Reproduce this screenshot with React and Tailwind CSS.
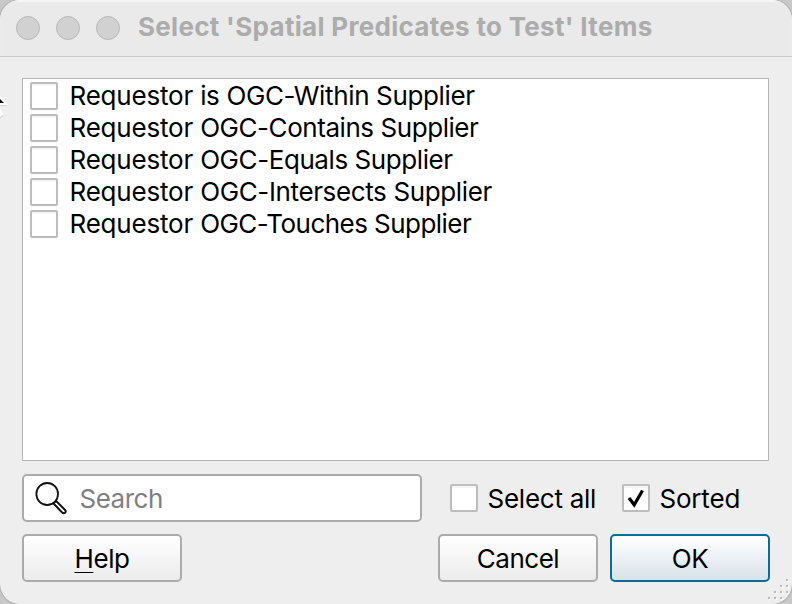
import React from "react";

const predicates = [
  { label: "is OGC-Within Supplier", tracking: "tracking-[-0.36px]" },
  { label: "OGC-Contains Supplier", tracking: "tracking-[-0.44px]" },
  { label: "OGC-Equals Supplier", tracking: "tracking-[-0.42px]" },
  { label: "OGC-Intersects Supplier", tracking: "tracking-[-0.37px]" },
  { label: "OGC-Touches Supplier", tracking: "tracking-[-0.54px]" },
];

const gripDots = [
  [22, 1], [16, 7], [22, 7], [10, 13], [16, 13], [22, 13], [4, 19], [10, 19], [16, 19],
];

function CheckBox({ checked }) {
  return (
    <span className="flex size-7 shrink-0 items-center justify-center rounded-[2px] border-2 border-[#bdbdbd] bg-white shadow-[inset_0_2px_1px_#f5f5f5]">
      {checked && (
        <svg width="24" height="24" viewBox="0 0 24 24" fill="none">
          <path d="M5 12 L10.2 18.8 L18.5 4.5" stroke="#000" strokeWidth="3.2" />
        </svg>
      )}
    </span>
  );
}

function Button({ children, primary }) {
  return (
    <button
      className={
        "flex h-12 w-40 items-center justify-center rounded-[5px] border-2 bg-linear-to-b pt-[2px] text-[26px] leading-8 " +
        (primary
          ? "border-[#0b6c94] from-white to-[#d8e2ea]"
          : "border-[#ababab] from-white to-[#ececec]")
      }
    >
      {children}
    </button>
  );
}

export default function App() {
  return (
    <div className="relative h-[604px] w-[792px] overflow-hidden bg-[#c9c9c9] font-['Inter','Liberation_Sans',sans-serif] text-black">
      <div className="flex h-full flex-col overflow-hidden rounded-[20px] bg-[#eeeeee] shadow-[0_0_2px_#777]">
        <header className="flex h-[57px] shrink-0 items-center border-b border-[#c8c8c8] bg-[#eaeaea] pl-4 shadow-[inset_0_2px_1px_#f6f6f6]">
          <div className="flex gap-4">
            <i className="size-6 rounded-full border border-[#b8b8b8] bg-[#d1d1d1]" />
            <i className="size-6 rounded-full border border-[#b8b8b8] bg-[#d1d1d1]" />
            <i className="size-6 rounded-full border border-[#b8b8b8] bg-[#d1d1d1]" />
          </div>
          <h1 className="ml-[18px] whitespace-nowrap pb-[2px] text-[26px] font-bold leading-8 tracking-[0.3px] text-[#acacac]">
            Select 'Spatial Predicates to Test' Items
          </h1>
        </header>
        <main className="flex flex-col px-[22px] pt-[21px]">
          <ul className="h-[383px] w-[747px] border border-[#b5b5b5] bg-white pl-[7px] pt-[1px]">
            {predicates.map((p) => (
              <li key={p.label} className="flex h-8 items-center gap-[11.5px]">
                <CheckBox />
                <span className={"whitespace-nowrap text-[26px] leading-8 " + p.tracking}>
                  <span className="tracking-[-0.2px]">Requestor </span>
                  {p.label}
                </span>
              </li>
            ))}
          </ul>
          <div className="mt-[13px] flex h-12 items-center">
            <div className="flex h-12 w-[400px] items-center rounded-[5px] border-2 border-[#ababab] bg-white pl-[9px]">
              <svg width="36" height="36" viewBox="0 0 36 36" fill="none" stroke="#111">
                <ellipse cx="14.2" cy="14" rx="10.8" ry="11" strokeWidth="1.8" />
                <path d="M20.3 23.3 L23.2 21 L32.3 30.2 Q33.4 31.8 31.9 32.8 Q30.2 33.7 29 32.3 Z" strokeWidth="2" />
              </svg>
              <span className="ml-[10.5px] pt-[2px] text-[26px] leading-8 tracking-[-0.5px] text-[#7f7f7f]">Search</span>
            </div>
            <label className="ml-7 flex w-[172px] items-center gap-[9.5px]">
              <CheckBox />
              <span className="whitespace-nowrap pt-[2px] text-[26px] leading-8 tracking-[-0.25px]">Select all</span>
            </label>
            <label className="flex items-center gap-[9.5px]">
              <CheckBox checked />
              <span className="pt-[2px] text-[26px] leading-8 tracking-[-0.2px]">Sorted</span>
            </label>
          </div>
          <div className="mt-3 flex h-12">
            <Button>
              <span className="tracking-[-0.4px]"><span className="underline decoration-1 underline-offset-4">H</span>elp</span>
            </Button>
            <div className="ml-64 flex gap-3">
              <Button><span className="tracking-[-0.5px]">Cancel</span></Button>
              <Button primary><span className="tracking-[-0.5px]">OK</span></Button>
            </div>
          </div>
        </main>
      </div>
      <svg className="absolute bottom-0 right-0" width="28" height="26" viewBox="0 0 28 26">
        {gripDots.map(([x, y]) => (
          <g key={x + "-" + y}>
            <rect x={x + 1} y={y + 1} width="2" height="2" fill="#fafafa" />
            <rect x={x} y={y} width="2" height="2" fill="#b9b9b9" />
          </g>
        ))}
      </svg>
      <svg className="absolute left-0 top-[94px]" width="10" height="30" viewBox="0 0 10 30">
        <path d="M0 1 L8 11 L0 11 Z M0 14 L3 21 L0 23 Z" fill="#fff" />
        <path d="M0 11.5 H7 M0 23.5 L3 22" stroke="#d2d2d2" strokeWidth="1" />
        <path d="M0 5 L4 9 L0 9 Z" fill="#000" />
      </svg>
    </div>
  );
}
